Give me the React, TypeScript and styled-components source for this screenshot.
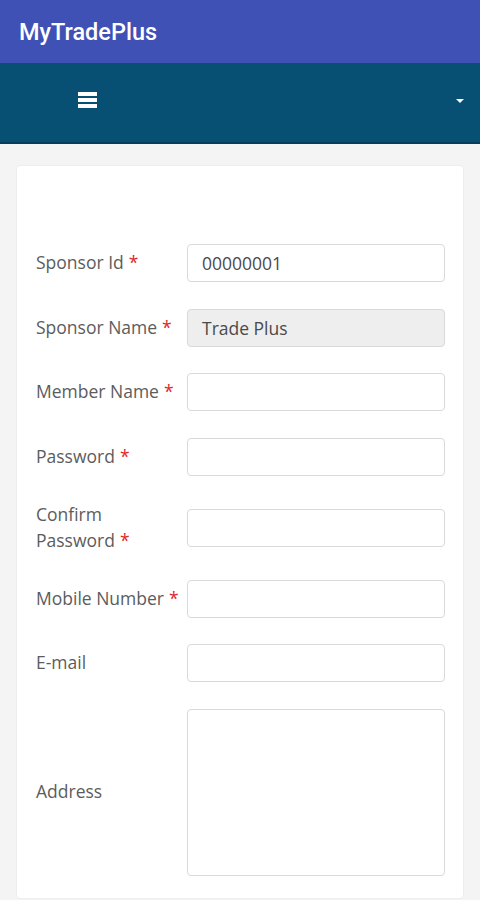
import React from "react";
import styled, { createGlobalStyle } from "styled-components";

const Global = createGlobalStyle`
  html, body { margin: 0; padding: 0; background: #f4f4f4; }
  body { font-family: "Open Sans", "Noto Sans", sans-serif; }
  * { box-sizing: border-box; }
`;

const Page = styled.div`
  width: 480px;
  height: 900px;
  overflow: hidden;
  display: flex;
  flex-direction: column;
  background: #f4f4f4;
`;

const AppBar = styled.header`
  height: 63px;
  background: #3f51b5;
  display: flex;
  align-items: center;
  padding-left: 19px;
  color: #fff;
  font-family: Roboto, sans-serif;
  font-weight: 500;
  font-size: 23.5px;
  flex-shrink: 0;
`;

const NavBar = styled.nav`
  height: 81px;
  background: #084f74;
  border-bottom: 2px solid #063d5c;
  display: flex;
  align-items: center;
  justify-content: space-between;
  padding: 0 16px 6px 78px;
  flex-shrink: 0;
`;

const Burger = styled.div`
  width: 19px;
  display: flex;
  flex-direction: column;
  gap: 2px;
  span {
    display: block;
    height: 4px;
    background: #fff;
  }
`;

const Caret = styled.div`
  width: 0;
  height: 0;
  border-left: 4.5px solid transparent;
  border-right: 4.5px solid transparent;
  border-top: 4.5px solid #fff;
  margin-top: 3px;
`;

const Body = styled.main`
  flex: 1;
  padding: 21px 16px 0 16px;
`;

const Card = styled.section`
  background: #fff;
  border: 1px solid #ededed;
  border-radius: 4px;
  padding: 78px 18px 22px 19px;
  display: flex;
  flex-direction: column;
  gap: 26.5px;
`;

const Row = styled.div`
  display: grid;
  grid-template-columns: 151px 1fr;
  align-items: center;
`;

const Label = styled.label`
  font-size: 17.5px;
  line-height: 25.5px;
  color: #5c5c5c;
  white-space: nowrap;
`;

const Req = styled.span`
  color: #e0262b;
  margin-left: 5px;
`;

const Input = styled.div<{ $disabled?: boolean; $tall?: boolean }>`
  height: ${(p) => (p.$tall ? "167px" : "38px")};
  border: 1.5px solid #d9d9d9;
  border-radius: 4px;
  background: ${(p) => (p.$disabled ? "#eeeeee" : "#fff")};
  font-size: 17.5px;
  color: #4a4a4a;
  padding: 0 14px;
  display: flex;
  align-items: center;
`;

const fields: { label: React.ReactNode; req?: boolean; value?: string; disabled?: boolean; tall?: boolean }[] = [
  { label: "Sponsor Id", req: true, value: "00000001" },
  { label: "Sponsor Name", req: true, value: "Trade Plus", disabled: true },
  { label: "Member Name", req: true },
  { label: "Password", req: true },
  { label: <>Confirm<br />Password</>, req: true },
  { label: "Mobile Number", req: true },
  { label: "E-mail" },
  { label: "Address", tall: true },
];

export default function App() {
  return (
    <Page>
      <Global />
      <AppBar>MyTradePlus</AppBar>
      <NavBar>
        <Burger>
          <span />
          <span />
          <span />
        </Burger>
        <Caret />
      </NavBar>
      <Body>
        <Card>
          {fields.map((f, i) => (
            <Row key={i}>
              <Label>
                {f.label}
                {f.req && <Req>*</Req>}
              </Label>
              <Input $disabled={f.disabled} $tall={f.tall}>
                {f.value}
              </Input>
            </Row>
          ))}
        </Card>
      </Body>
    </Page>
  );
}
